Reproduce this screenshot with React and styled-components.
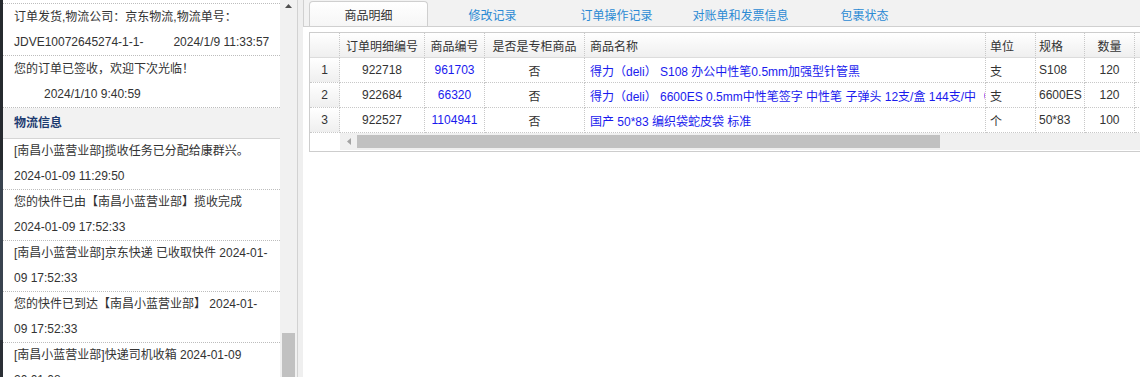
import React from "react";
import styled, { createGlobalStyle } from "styled-components";

const GlobalStyle = createGlobalStyle`
  html, body { margin: 0; padding: 0; }
  body {
    font-family: "Liberation Sans", "Noto Sans CJK SC", sans-serif;
    font-size: 12px;
    color: #333;
    background: #f0f0f0;
  }
`;

const Page = styled.div`
  display: flex;
  width: 1140px;
  height: 377px;
  overflow: hidden;
  background: #efefef;
`;

const Edge = styled.div`
  flex: none;
  width: 3px;
  background: linear-gradient(
    #262a2f 0, #262a2f 170px,
    #39434f 170px, #39434f 340px,
    #2a2f35 340px
  );
`;

const Sidebar = styled.aside`
  flex: none;
  display: flex;
  width: 295px;
  box-sizing: border-box;
  border-right: 1px solid #d2d2d2;
`;

const SideList = styled.div`
  width: 277px;
  flex: none;
  background: #fff;
  overflow: hidden;
  padding-top: 3px;
  box-sizing: border-box;
`;

const LogItem = styled.div`
  padding: ${(p) => (p.$top ? "1px" : "0")} 0 0 11px;
  border-bottom: 1px dotted #bdbdbd;
  &:first-child { border-top: 1px dotted #bdbdbd; }
`;

const Line = styled.div`
  line-height: 25px;
  height: 25px;
  white-space: nowrap;
`;

const Stamp = styled.span`
  margin-left: 30px;
`;

const SectionHead = styled.div`
  height: 30px;
  line-height: 30px;
  padding-left: 11px;
  background: #f2f2f2;
  border-bottom: 1px solid #d5d5d5;
  font-weight: bold;
  color: #1c3a70;
`;

const SideScroll = styled.div`
  width: 17px;
  flex: none;
  background: #f1f1f1;
  display: flex;
  flex-direction: column;
  align-items: center;
  justify-content: space-between;
`;

const UpArrow = styled.svg`
  margin-top: 4px;
  display: block;
`;

const SideThumb = styled.div`
  width: 13px;
  height: 44px;
  background: #c1c1c1;
`;

const Main = styled.main`
  flex: 1;
  min-width: 0;
  margin-left: 5px;
  display: flex;
  flex-direction: column;
  background: #fff;
  overflow: hidden;
`;

const TabBar = styled.nav`
  height: 26px;
  display: flex;
  align-items: flex-end;
  gap: 5px;
  padding-left: 5px;
  background: #f2f2f2;
  border-left: 1px solid #d0d0d0;
  border-bottom: 1px solid #d0d0d0;
`;

const Tab = styled.div`
  flex: none;
  width: 119px;
  height: 25px;
  box-sizing: border-box;
  display: flex;
  align-items: center;
  justify-content: center;
  border: 1px solid ${(p) => (p.$active ? "#cfcfcf" : "transparent")};
  border-bottom: none;
  border-radius: 4px 4px 0 0;
  background: ${(p) => (p.$active ? "linear-gradient(#ffffff, #f6f6f6)" : "transparent")};
  color: ${(p) => (p.$active ? "#333" : "#2b8ad4")};
`;

const Content = styled.div`
  padding: 5px 0 0 6px;
`;

const Grid = styled.div`
  display: grid;
  width: max-content;
  grid-template-columns: 30px 85px 60px 100px 401px 50px 49px 50px 80px;
  border: 1px solid #cdcdcd;
`;

const HeadCell = styled.div`
  height: 25px;
  box-sizing: border-box;
  display: flex;
  align-items: center;
  justify-content: ${(p) => (p.$left ? "flex-start" : "center")};
  padding-left: ${(p) => (p.$left ? `${p.$left}px` : "0")};
  border-right: 1px dotted #c8c8c8;
  border-bottom: 1px solid #dcdcdc;
  background: linear-gradient(#ffffff, #efefef);
  white-space: nowrap;
`;

const Cell = styled.div`
  height: 25px;
  box-sizing: border-box;
  display: flex;
  align-items: center;
  justify-content: ${(p) => (p.$left ? "flex-start" : "center")};
  padding-left: ${(p) => (p.$left ? `${p.$left}px` : "0")};
  border-right: 1px dotted #c8c8c8;
  border-bottom: 1px dotted #c8c8c8;
  white-space: nowrap;
  overflow: hidden;
  color: ${(p) => (p.$link ? "#1a1aee" : "#333")};
  background: ${(p) => (p.$num ? "linear-gradient(#ffffff, #efefef)" : "#fff")};
`;

const ScrollRow = styled.div`
  grid-column: 1 / -1;
  display: flex;
  height: 18px;
  background: #fff;
`;

const ScrollGap = styled.div`
  width: 30px;
  flex: none;
`;

const Track = styled.div`
  flex: 1;
  height: 17px;
  display: flex;
  align-items: center;
  background: #f0f0f0;
`;

const ArrowBtn = styled.div`
  width: 17px;
  flex: none;
  display: flex;
  align-items: center;
  justify-content: center;
`;

const Thumb = styled.div`
  width: ${(p) => p.$w}px;
  height: 13px;
  background: #c1c1c1;
`;

const orderLog = [
  ["订单发货,物流公司：京东物流,物流单号：", ["JDVE10072645274-1-1-", "2024/1/9 11:33:57"]],
  ["您的订单已签收，欢迎下次光临！", ["", "2024/1/10 9:40:59"]],
];

const trackLog = [
  ["[南昌小蓝营业部]揽收任务已分配给康群兴。", "2024-01-09 11:29:50"],
  ["您的快件已由【南昌小蓝营业部】揽收完成", "2024-01-09 17:52:33"],
  ["[南昌小蓝营业部]京东快递 已收取快件 2024-01-", "09 17:52:33"],
  ["您的快件已到达【南昌小蓝营业部】 2024-01-", "09 17:52:33"],
  ["[南昌小蓝营业部]快递司机收箱 2024-01-09", "20:01:08"],
];

const tabs = ["商品明细", "修改记录", "订单操作记录", "对账单和发票信息", "包裹状态"];

const rows = [
  ["922718", "961703", "否", "得力（deli） S108 办公中性笔0.5mm加强型针管黑", "支", "S108", "120"],
  ["922684", "66320", "否", "得力（deli） 6600ES 0.5mm中性笔签字 中性笔 子弹头 12支/盒 144支/中（大）", "支", "6600ES", "120"],
  ["922527", "1104941", "否", "国产 50*83 编织袋蛇皮袋 标准", "个", "50*83", "100"],
];

export default function App() {
  return (
    <>
      <GlobalStyle />
      <Page>
        <Edge />
        <Sidebar>
          <SideList>
            {orderLog.map(([first, [lead, time]], i) => (
              <LogItem $top key={i}>
                <Line>{first}</Line>
                <Line>
                  {lead}
                  <Stamp>{time}</Stamp>
                </Line>
              </LogItem>
            ))}
            <SectionHead>物流信息</SectionHead>
            {trackLog.map(([a, b], i) => (
              <LogItem key={i}>
                <Line>{a}</Line>
                <Line>{b}</Line>
              </LogItem>
            ))}
          </SideList>
          <SideScroll>
            <UpArrow width="7" height="4" viewBox="0 0 7 4">
              <path d="M0 4 L3.5 0 L7 4 Z" fill="#505050" />
            </UpArrow>
            <SideThumb />
          </SideScroll>
        </Sidebar>
        <Main>
          <TabBar>
            {tabs.map((t, i) => (
              <Tab key={t} $active={i === 0}>{t}</Tab>
            ))}
          </TabBar>
          <Content>
            <Grid>
              <HeadCell />
              <HeadCell>订单明细编号</HeadCell>
              <HeadCell>商品编号</HeadCell>
              <HeadCell>是否是专柜商品</HeadCell>
              <HeadCell $left={5}>商品名称</HeadCell>
              <HeadCell $left={4}>单位</HeadCell>
              <HeadCell $left={3}>规格</HeadCell>
              <HeadCell>数量</HeadCell>
              <HeadCell />
              {rows.map((r, i) => (
                <React.Fragment key={r[0]}>
                  <Cell $num>{i + 1}</Cell>
                  <Cell>{r[0]}</Cell>
                  <Cell $link>{r[1]}</Cell>
                  <Cell>{r[2]}</Cell>
                  <Cell $link $left={5}>{r[3]}</Cell>
                  <Cell $left={4}>{r[4]}</Cell>
                  <Cell $left={3}>{r[5]}</Cell>
                  <Cell>{r[6]}</Cell>
                  <Cell />
                </React.Fragment>
              ))}
              <ScrollRow>
                <ScrollGap />
                <Track>
                  <ArrowBtn>
                    <svg width="4" height="7" viewBox="0 0 4 7">
                      <path d="M4 0 L0 3.5 L4 7 Z" fill="#a3a3a3" />
                    </svg>
                  </ArrowBtn>
                  <Thumb $w={583} />
                </Track>
              </ScrollRow>
            </Grid>
          </Content>
        </Main>
      </Page>
    </>
  );
}
